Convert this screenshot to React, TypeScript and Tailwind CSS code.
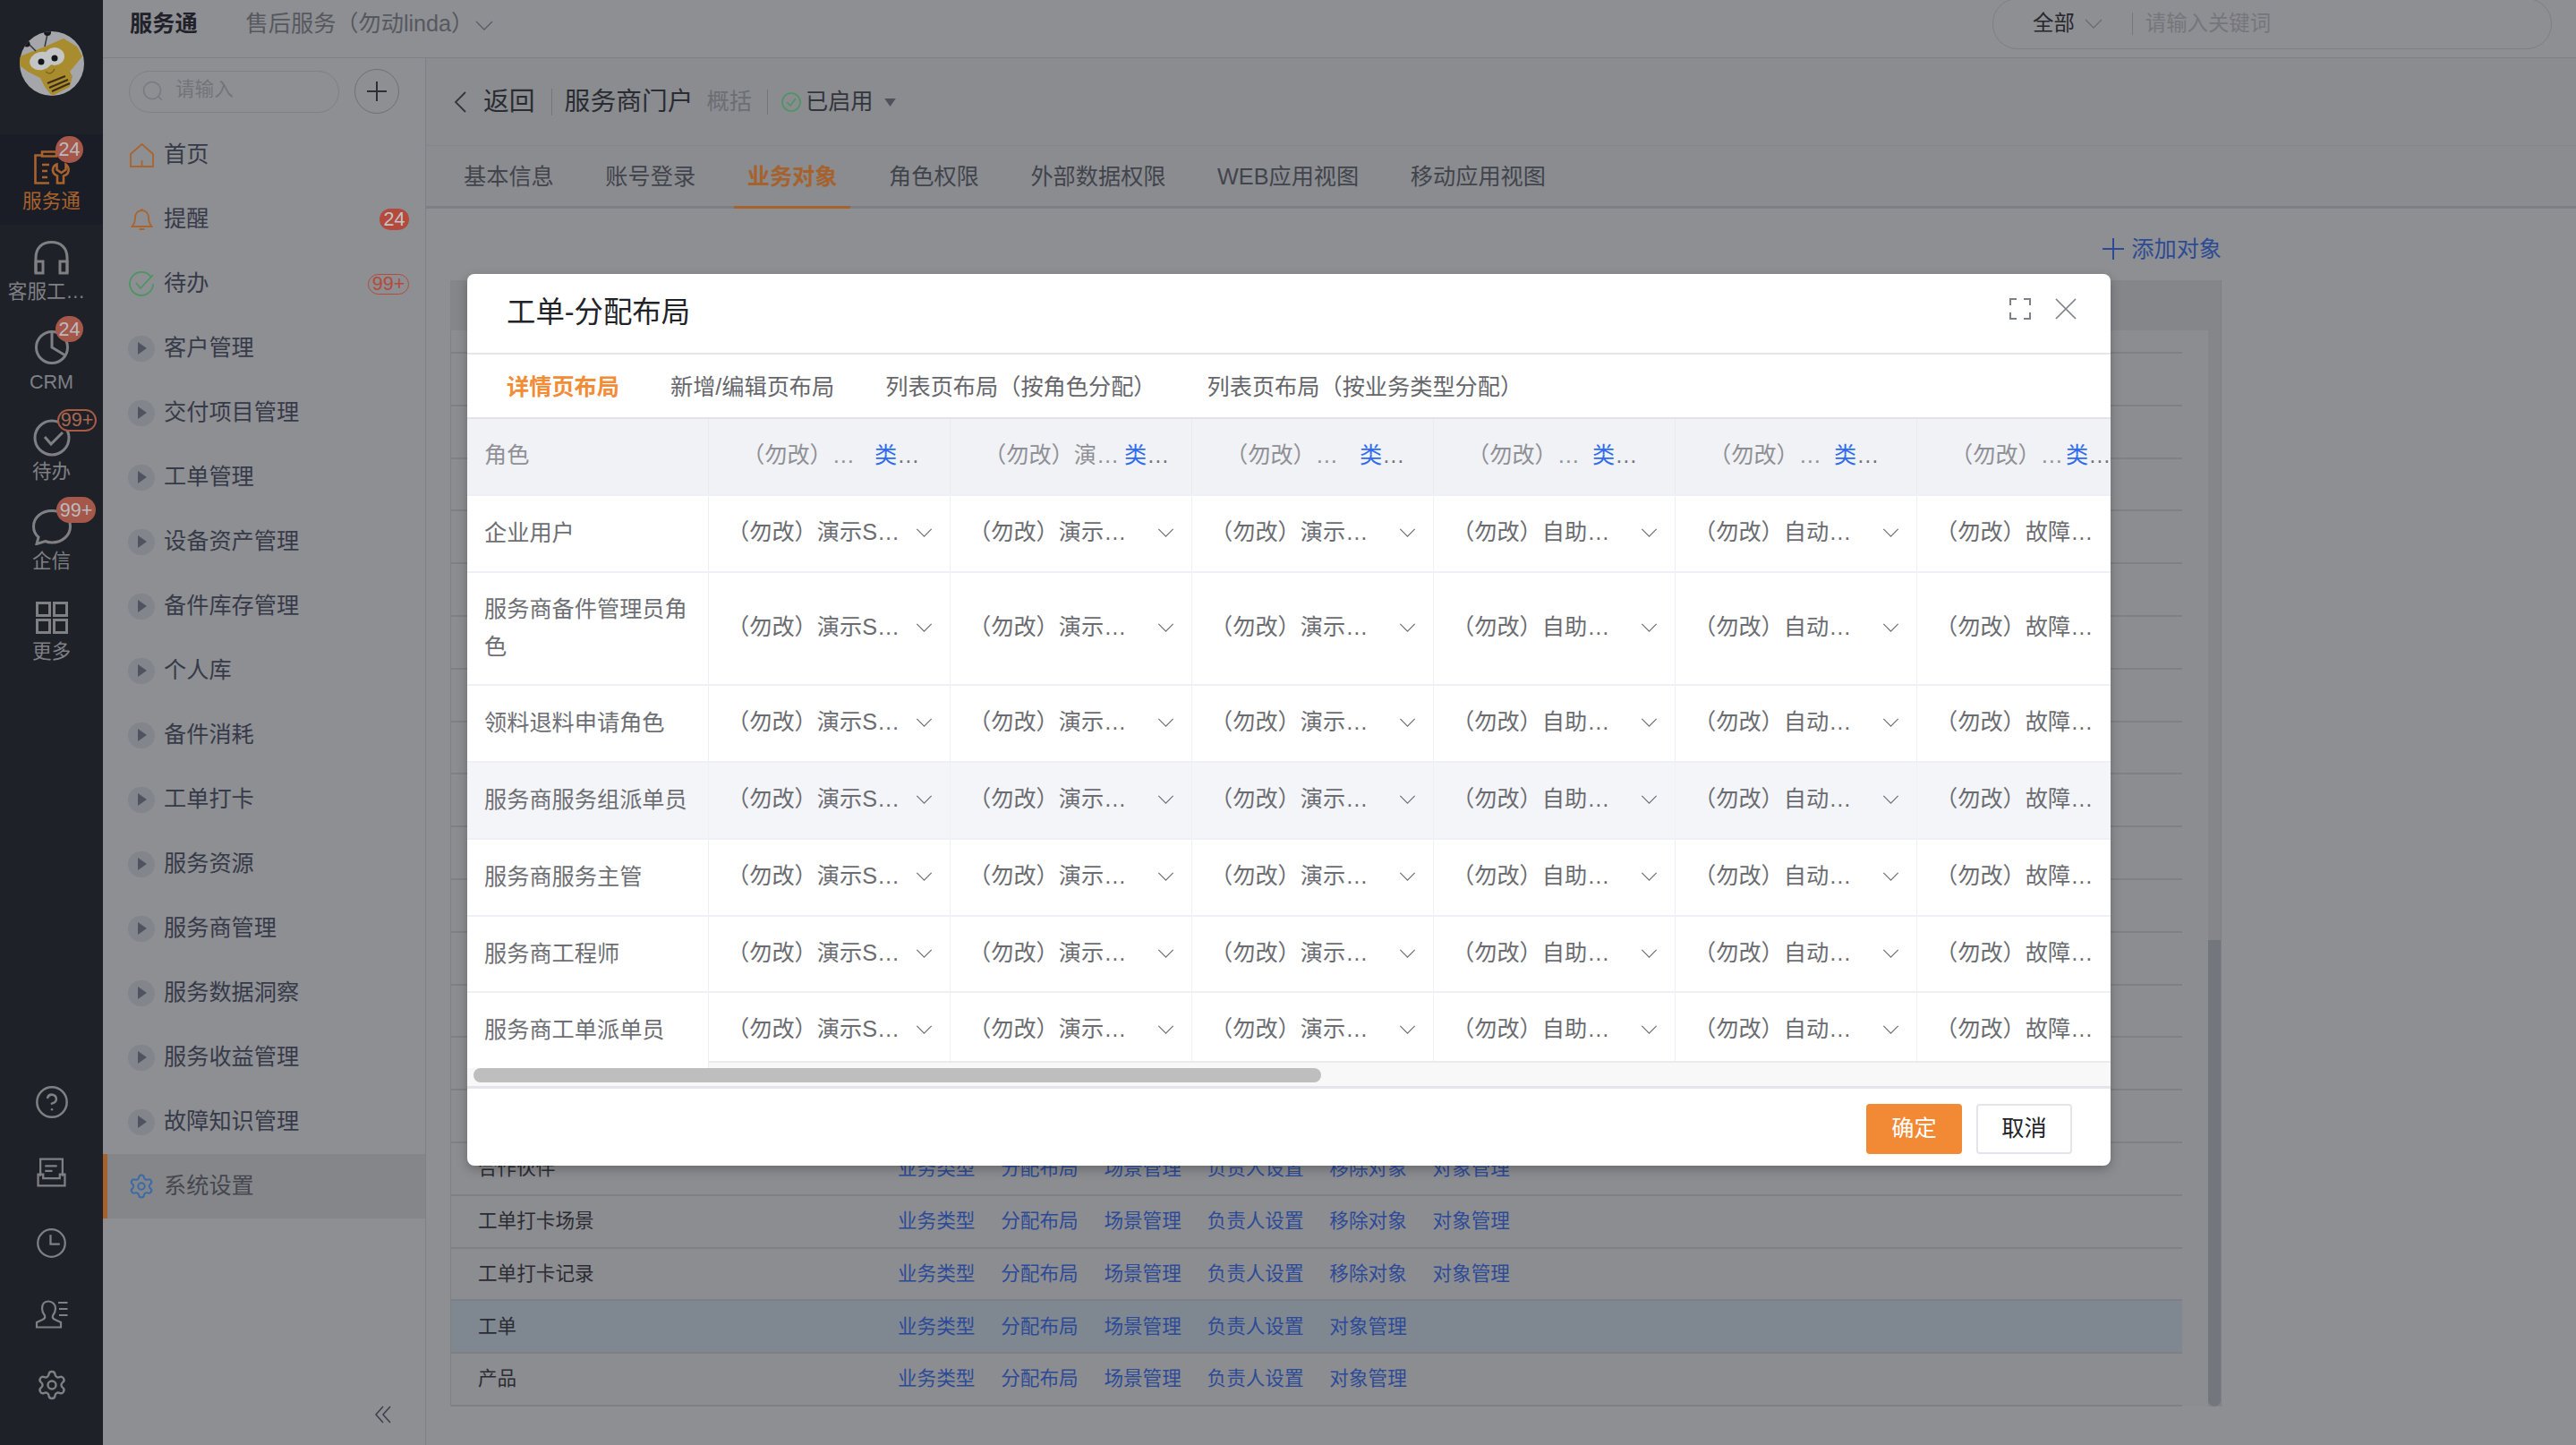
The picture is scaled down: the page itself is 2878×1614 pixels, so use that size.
import React from "react";
import { Settings, CircleHelp } from "lucide-react";

const navItems = ["客户管理", "交付项目管理", "工单管理", "设备资产管理", "备件库存管理", "个人库", "备件消耗", "工单打卡", "服务资源", "服务商管理", "服务数据洞察", "服务收益管理", "故障知识管理"];
const roles = [
  { name: "企业用户", h: "h-[86px]" },
  { name: "服务商备件管理员角色", h: "h-[126px]" },
  { name: "领料退料申请角色", h: "h-[86px]" },
  { name: "服务商服务组派单员", h: "h-[86px]", hover: true },
  { name: "服务商服务主管", h: "h-[86px]" },
  { name: "服务商工程师", h: "h-[85px]" },
  { name: "服务商工单派单员", h: "h-[86px]" },
];
const selects = ["（勿改）演示S…", "（勿改）演示…", "（勿改）演示…", "（勿改）自助…", "（勿改）自动…", "（勿改）故障…"];
const heads = [
  { t: "（勿改）…", w: "w-[148px]" },
  { t: "（勿改）演…", w: "w-[157px]" },
  { t: "（勿改）…", w: "w-[150px]" },
  { t: "（勿改）…", w: "w-[140px]" },
  { t: "（勿改）…", w: "w-[140px]" },
  { t: "（勿改）…", w: "w-[129px]" },
];
const bgRows = [
  { name: "合作伙伴", remove: true },
  { name: "工单打卡场景", remove: true },
  { name: "工单打卡记录", remove: true },
  { name: "工单", remove: false, active: true },
  { name: "产品", remove: false },
];

function Chevron({ className }: { className: string }) {
  return (
    <svg viewBox="0 0 20 11" fill="none" stroke="currentColor" strokeWidth="1.3" className={className}>
      <path d="M1 1l9 9 9-9" />
    </svg>
  );
}

function Badge({ text, outlined, className }: { text: string; outlined?: boolean; className: string }) {
  return (
    <span className={`absolute flex items-center justify-center rounded-full text-[21.6px] leading-none ${outlined ? "border-[2px] border-[#a85a45] bg-[#1e2029] text-[#a8694f]" : "bg-[#a5574a] text-[#b9bbc0]"} ${className}`}>
      {text}
    </span>
  );
}

function Avatar() {
  return (
    <svg viewBox="0 0 72 72" className="h-[72px] w-[72px]">
      <defs>
        <clipPath id="av">
          <circle cx="36" cy="36" r="36" />
        </clipPath>
      </defs>
      <g clipPath="url(#av)">
        <rect width="72" height="72" fill="#a4a6aa" />
        <path d="M0 28L26 18 49 8 64 17 70 28 56 45 59 50 56 62 36 72 28 62 23 52 9 45 0 38Z" fill="#a88c2d" />
        <ellipse cx="24" cy="33" rx="13" ry="10" fill="#c4c5c7" transform="rotate(-15 24 33)" />
        <ellipse cx="39" cy="28" rx="11" ry="10" fill="#c4c5c7" />
        <circle cx="24" cy="34" r="3.5" fill="#15161a" />
        <circle cx="39" cy="30" r="3.5" fill="#15161a" />
        <path d="M29 45Q35 50 39 42" fill="none" stroke="#7d651e" strokeWidth="1.5" />
        <path d="M31 58L51 50M33 63L54 54M36 67L56 58" stroke="#3a2c18" strokeWidth="2.2" />
        <path d="M18 22L9 13M28 17L31 3" stroke="#34353a" strokeWidth="1.5" />
        <circle cx="8" cy="14" r="3.5" fill="#17181c" />
        <circle cx="31" cy="1" r="4" fill="#17181c" />
      </g>
    </svg>
  );
}

function RailItem({ label, icon, badge, active, badgeOutlined, badgeClass, labelClass }: { label: string; icon: React.ReactNode; badge?: string; active?: boolean; badgeOutlined?: boolean; badgeClass?: string; labelClass?: string }) {
  return (
    <div className={`relative flex h-[100.6px] flex-col items-center pt-[17px] ${active ? "bg-[#1b1d26] text-[#a8622d]" : "text-[#7f8084]"}`}>
      <div className="flex h-[40px] items-center justify-center">{icon}</div>
      <div className={`mt-[3px] h-[30px] whitespace-nowrap text-[21.6px] leading-[30px] ${labelClass ?? ""}`}>{label}</div>
      {badge && <Badge text={badge} outlined={badgeOutlined} className={badgeClass ?? ""} />}
    </div>
  );
}

function Rail() {
  return (
    <div className="flex h-full w-[115px] shrink-0 flex-col bg-[#1f2129]">
      <div className="flex h-[150px] justify-center pt-[35px]">
        <Avatar />
      </div>
      <RailItem
        active
        label="服务通"
        badge="24"
        badgeClass="left-[62px] top-[2px] h-[30px] w-[31px]"
        icon={
          <svg viewBox="0 0 40 38" fill="none" stroke="currentColor" strokeWidth="2.6" className="h-[38px] w-[40px]">
            <path d="M9 5.5H1.5V36.5H17M9 1.5H25V6.5H9ZM9 16H17M9 23H15M9 30H15" />
            <path d="M25.5 15.5C21 17 20 22 22 25.5C23 27 25 28 26 28.5V36.5H33V28.5C35 28 38 26 38.5 23C39 20.5 38 17 35.5 15.5V21.5L30.5 25L25.5 21.5Z" />
          </svg>
        }
      />
      <RailItem
        label="客服工…"
        labelClass="mr-[11px]"
        icon={
          <svg viewBox="0 0 39 38" fill="none" stroke="currentColor" strokeWidth="3" className="h-[38px] w-[39px]">
            <path d="M2 36V19C2 8 9 1.5 19.5 1.5S37 8 37 19V36" />
            <rect x="2" y="23" width="8" height="13" />
            <rect x="29" y="23" width="8" height="13" />
          </svg>
        }
      />
      <RailItem
        label="CRM"
        labelClass="mt-[4px]"
        badge="24"
        badgeClass="left-[62px] top-[2px] h-[29px] w-[31px]"
        icon={
          <svg viewBox="0 0 38 38" fill="none" stroke="currentColor" strokeWidth="3" className="h-[38px] w-[38px]">
            <circle cx="19" cy="19" r="17.5" />
            <path d="M19 1.5V19L34 28" />
          </svg>
        }
      />
      <RailItem
        label="待办"
        badge="99+"
        badgeOutlined
        badgeClass="left-[64px] top-[5px] h-[25px] w-[44px]"
        icon={
          <svg viewBox="0 0 42 42" fill="none" stroke="currentColor" strokeWidth="3" className="h-[42px] w-[42px]">
            <circle cx="21" cy="21" r="19" />
            <path d="M13 20L20 28L33 15" />
          </svg>
        }
      />
      <RailItem
        label="企信"
        badge="99+"
        badgeClass="left-[63px] top-[3px] h-[29px] w-[44px]"
        icon={
          <svg viewBox="0 0 44 40" fill="none" stroke="currentColor" strokeWidth="3" className="h-[40px] w-[44px]">
            <path d="M22 1.5C10.5 1.5 1.5 9 1.5 19C1.5 24 3.5 28 7 31L5 38.5L14.5 35.5C17 36.5 19.5 37 22 37C33.5 37 42.5 29 42.5 19S33.5 1.5 22 1.5Z" />
          </svg>
        }
      />
      <RailItem
        label="更多"
        icon={
          <svg viewBox="0 0 36 36" fill="none" stroke="currentColor" strokeWidth="3" className="h-[36px] w-[36px]">
            <rect x="1.5" y="1.5" width="14" height="14" />
            <rect x="20.5" y="1.5" width="14" height="14" />
            <rect x="1.5" y="20.5" width="14" height="14" />
            <rect x="20.5" y="20.5" width="14" height="14" />
          </svg>
        }
      />
      <div className="mt-auto flex flex-col items-center pb-[28px] text-[#7f8084]">
        <div className="flex h-[79px] items-center">
          <CircleHelp size={40} strokeWidth={1.5} />
        </div>
        <div className="flex h-[79px] items-center">
          <svg viewBox="0 0 32 32" fill="none" stroke="currentColor" strokeWidth="2.2" className="h-[33px] w-[33px]">
            <path d="M4 20V1.5H28V20M9 9H22M9 14.5H17" />
            <path d="M1.5 18V30.5H30.5V18H25V22.5H7V18Z" />
          </svg>
        </div>
        <div className="flex h-[79px] items-center">
          <svg viewBox="0 0 32 32" fill="none" stroke="currentColor" strokeWidth="2.2" className="h-[33px] w-[33px]">
            <circle cx="16" cy="16" r="14.8" />
            <path d="M15 7V17H25" />
          </svg>
        </div>
        <div className="flex h-[79px] items-center">
          <svg viewBox="0 0 37 32" fill="none" stroke="currentColor" strokeWidth="2.2" className="h-[32px] w-[37px]">
            <path d="M15 1.5C10.5 1.5 8 5 8 9.5C8 13 9.5 15.5 11 17.5C11.5 19 11 21 8.5 22L2 25V30.5H29V25L22.5 22C20 21 19.5 19 20 17.5C21.5 15.5 23 13 23 9.5C23 5 19.5 1.5 15 1.5Z" />
            <path d="M26 3H36.5M27 10H36.5M27 17H36.5" />
          </svg>
        </div>
        <div className="flex h-[79px] items-center">
          <Settings size={36} strokeWidth={1.6} />
        </div>
      </div>
    </div>
  );
}

function Sidebar() {
  return (
    <div className="flex h-full w-[361px] shrink-0 flex-col border-r-[1px] border-[#7f8085] bg-[#8e8f92]">
      <div className="flex items-center gap-[17px] pl-[29px] pt-[12px]">
        <div className="flex h-[47px] w-[235px] items-center gap-[13px] rounded-full border border-[#7f8085] pl-[14px]">
          <svg viewBox="0 0 24 24" fill="none" stroke="#777a80" strokeWidth="1.6" className="h-[24px] w-[24px]">
            <circle cx="11" cy="11" r="9.5" />
            <path d="M18 18l4 4" />
          </svg>
          <span className="-mt-[3px] text-[21.6px] text-[#72747a]">请输入</span>
        </div>
        <div className="flex h-[50px] w-[50px] items-center justify-center rounded-full border border-[#6f7076]">
          <svg viewBox="0 0 22 22" stroke="#2c2e38" strokeWidth="2" className="h-[22px] w-[22px]">
            <path d="M11 0V22M0 11H22" />
          </svg>
        </div>
      </div>
      <div className="mt-[10px] flex flex-col text-[25.2px] leading-none text-[#363a49]">
        <div className="relative flex h-[72px] items-center pl-[28px]">
          <div className="mr-[10px] flex w-[30px] justify-center">
            <svg viewBox="0 0 27 27" fill="none" stroke="#a8652f" strokeWidth="1.8" className="h-[27px] w-[27px]">
              <path d="M1 12L13.5 1L26 12V26H1ZM13.5 19V26" />
            </svg>
          </div>
          首页
        </div>
        <div className="relative flex h-[72px] items-center pl-[28px]">
          <div className="mr-[10px] flex w-[30px] justify-center">
            <svg viewBox="0 0 25 26" fill="none" stroke="#a8652f" strokeWidth="1.8" className="h-[26px] w-[25px]">
              <path d="M12.5 3C7.5 3 5 7 5 11C5 16 4 18 1.5 21H23.5C21 18 20 16 20 11C20 7 17.5 3 12.5 3ZM12.5 3V1M9.5 24H15.5" />
            </svg>
          </div>
          提醒
          <span className="ml-auto mr-[18px] flex h-[24px] w-[33px] items-center justify-center rounded-full bg-[#b44a3c] text-[21.6px] text-[#c3c4c7]">24</span>
        </div>
        <div className="relative flex h-[72px] items-center pl-[28px]">
          <div className="mr-[10px] flex w-[30px] justify-center">
            <svg viewBox="0 0 30 28" fill="none" stroke="#4d9465" strokeWidth="1.8" className="h-[28px] w-[30px]">
              <path d="M26 7A13 13 0 1 0 28 14" />
              <path d="M9 13L14 19L28 4" />
            </svg>
          </div>
          待办
          <span className="ml-auto mr-[18px] flex h-[23px] w-[46px] items-center justify-center rounded-full border border-[#b44a3c] text-[21.6px] text-[#b44a3c]">99+</span>
        </div>
        {navItems.map((n) => (
          <div key={n} className="flex h-[72px] items-center pl-[28px]">
            <div className="mr-[10px] flex h-[29px] w-[30px] items-center justify-center rounded-full bg-[#82858c]">
              <svg viewBox="0 0 10 14" fill="#4f5460" className="ml-[2px] h-[14px] w-[10px]">
                <path d="M0 0L10 7L0 14Z" />
              </svg>
            </div>
            {n}
          </div>
        ))}
        <div className="flex h-[72px] items-center border-l-[5px] border-[#a5622d] bg-[#85868a] pl-[23px] text-[#45474f]">
          <div className="mr-[10px] flex w-[30px] justify-center">
            <Settings size={30} strokeWidth={1.6} className="text-[#3a6aa8]" />
          </div>
          系统设置
        </div>
      </div>
      <div className="mt-auto flex justify-end pb-[24px] pr-[38px]">
        <svg viewBox="0 0 18 20" fill="none" stroke="#3b3e4d" strokeWidth="1.5" className="h-[20px] w-[18px]">
          <path d="M9 1L1 10L9 19M17 1L9 10L17 19" />
        </svg>
      </div>
    </div>
  );
}

function TopBar() {
  return (
    <div className="flex h-[65px] shrink-0 items-center border-b border-[#7e7f84] bg-[#8e8f92] pb-[10px] pl-[30px] pr-[27px]">
      <span className="text-[25.2px] font-bold text-[#20212a]">服务通</span>
      <span className="ml-[54px] text-[25.2px] text-[#565860]">售后服务（勿动linda）</span>
      <Chevron className="ml-[2px] mt-[2px] h-[11px] w-[20px] text-[#5a5c63]" />
      <div className="ml-auto mt-[-1px] flex h-[57px] w-[625px] items-center rounded-b-[28px] rounded-t-[28px] border border-[#7e7f84] pl-[44px]">
        <span className="text-[23.4px] text-[#26272d]">全部</span>
        <Chevron className="ml-[11px] h-[11px] w-[20px] text-[#6a6c72]" />
        <span className="ml-[33px] mr-[14px] h-[25px] w-px bg-[#77787d]" />
        <span className="text-[23.4px] text-[#75767c]">请输入关键词</span>
      </div>
    </div>
  );
}

function PageTitle() {
  return (
    <div className="flex h-[98px] shrink-0 items-center border-b border-[#85868b] bg-[#8a8c90] pl-[31px]">
      <svg viewBox="0 0 14 24" fill="none" stroke="#33353d" strokeWidth="1.8" className="h-[24px] w-[14px]">
        <path d="M13 1L2 12L13 23" />
      </svg>
      <span className="ml-[19px] text-[28.8px] text-[#2a2c33]">返回</span>
      <span className="ml-[18px] h-[30px] w-px bg-[#74757b]" />
      <span className="ml-[14px] text-[28.8px] text-[#2a2c33]">服务商门户</span>
      <span className="ml-[15px] text-[25.2px] text-[#6c6e74]">概括</span>
      <span className="ml-[17px] h-[28px] w-px bg-[#74757b]" />
      <svg viewBox="0 0 22 22" fill="none" stroke="#4d9465" strokeWidth="1.6" className="ml-[15px] h-[22px] w-[22px]">
        <circle cx="11" cy="11" r="10" />
        <path d="M6 11L10 15L16 7" />
      </svg>
      <span className="ml-[5px] text-[25.2px] text-[#33353d]">已启用</span>
      <svg viewBox="0 0 14 10" fill="#4f525c" className="ml-[12px] mt-[2px] h-[9px] w-[13px]">
        <path d="M0 0H14L7 10Z" />
      </svg>
    </div>
  );
}

function Tabs() {
  const tabs = ["基本信息", "账号登录", "业务对象", "角色权限", "外部数据权限", "WEB应用视图", "移动应用视图"];
  return (
    <div className="flex h-[70px] shrink-0 gap-[27.6px] border-b-[3px] border-[#7e7f84] bg-[#8a8c90] pl-[27px]">
      {tabs.map((t, i) => (
        <div key={t} className={`-mb-[3px] flex items-center px-[15px] text-[25.2px] ${i === 2 ? "border-b-[3px] border-[#a5622d] pt-[3px] font-bold text-[#a5622d]" : "text-[#42444c]"}`}>
          {t}
        </div>
      ))}
    </div>
  );
}

function BackgroundTable() {
  const blanks = Array.from({ length: 15 });
  return (
    <div className="mx-[27px] flex w-[1979px] flex-col">
      <div className="flex h-[80px] items-start justify-end pt-[30px]">
        <div className="flex items-center gap-[8px] text-[25.2px] leading-[30px] text-[#2d4a94]">
          <svg viewBox="0 0 24 24" stroke="#2d4a94" strokeWidth="2" className="h-[24px] w-[24px]">
            <path d="M12 0V24M0 12H24" />
          </svg>
          添加对象
        </div>
      </div>
      <div className="flex flex-col border-b-0 border-r border-[#7f8085]">
        <div className="h-[56px] bg-[#84868a]" />
        <div className="flex bg-[#8c8d90]">
          <div className="w-[1936px] border-l border-[#808185]">
            <div className="h-[26px] border-b-[2px] border-[#7f8084]" />
            {blanks.map((_, i) => (
              <div key={i} className="h-[58.8px] border-b-[2px] border-[#7f8084]" />
            ))}
            {bgRows.map((r) => (
              <div key={r.name} className={`flex h-[58.8px] items-center border-b-[2px] border-[#7f8084] pl-[30px] text-[21.6px] ${r.active ? "bg-[#7f8791]" : ""}`}>
                <span className="w-[469px] text-[#2b2c33]">{r.name}</span>
                <span className="flex gap-[28.8px] text-[#2c4a98]">
                  <span>业务类型</span>
                  <span>分配布局</span>
                  <span>场景管理</span>
                  <span>负责人设置</span>
                  {r.remove && <span>移除对象</span>}
                  <span>对象管理</span>
                </span>
              </div>
            ))}
          </div>
          <div className="w-[29px]" />
          <div className="flex w-[14px] flex-col bg-[#85868a]">
            <div className="mt-auto h-[521px] rounded-b-full bg-[#74767e]" />
          </div>
        </div>
      </div>
    </div>
  );
}

function Modal() {
  return (
    <div className="absolute left-[522px] top-[306px] flex h-[996px] w-[1836px] flex-col overflow-hidden rounded-[8px] bg-white shadow-[0_4px_12px_rgba(0,0,0,0.25)]">
      <div className="flex h-[90px] shrink-0 items-center border-b-[2px] border-[#e6e6ea] pb-[1px] pl-[44px] pr-[38px]">
        <span className="text-[32.4px] text-[#222329]">工单-分配布局</span>
        <svg viewBox="0 0 24 24" fill="none" stroke="#7d8089" strokeWidth="2" className="-mt-[9px] ml-auto h-[24px] w-[24px]">
          <path d="M1 8V1H8M16 1H23V8M23 16V23H16M8 23H1V16" />
        </svg>
        <svg viewBox="0 0 24 24" fill="none" stroke="#7d8089" strokeWidth="1.7" className="-mt-[9px] ml-[27px] h-[24px] w-[24px]">
          <path d="M1 1L23 23M23 1L1 23" />
        </svg>
      </div>
      <div className="flex h-[70px] shrink-0 items-center gap-[57px] pl-[44px] pt-[4px] text-[25.2px] text-[#66676c]">
        <span className="font-bold text-[#f28c36]">详情页布局</span>
        <span>新增/编辑页布局</span>
        <span>列表页布局（按角色分配）</span>
        <span>列表页布局（按业务类型分配）</span>
      </div>
      <div className="relative h-[750px] shrink-0 overflow-hidden border-t-[2px] border-[#e2e3e8] text-[25.2px]">
        <div className="flex h-[84px] w-max items-center bg-[#f1f2f5]">
          <div className="flex h-full w-[270px] items-center border-r border-[#e9eaee] pb-[2px] pl-[19px] text-[#8f9095]">角色</div>
          {heads.map((h, i) => (
            <div key={i} className="flex h-full w-[270px] shrink-0 items-center border-r border-[#e9eaee] pb-[2px] pl-[37px]">
              <span className={`${h.w} text-[#8f9095]`}>{h.t}</span>
              <span className="text-[#2f6bf0]">类<span className="text-[#6f7480]">…</span></span>
            </div>
          ))}
        </div>
        {roles.map((r) => (
          <div key={r.name} className={`flex w-max border-t-[2px] border-[#eef0f5] ${r.h} ${r.hover ? "bg-[#f4f5f9]" : "bg-white"}`}>
            <div className="flex w-[270px] shrink-0 items-center border-r border-[#eef0f5] pb-[2px] pl-[19px] pr-[18px] text-[#6e6f74] leading-[42px]">{r.name}</div>
            {selects.map((s, i) => (
              <div key={i} className="flex w-[270px] shrink-0 items-center border-r border-[#eef0f5] pb-[2px] pl-[20px] text-[#6b6c71]">
                <span className="w-[211px]">{s}</span>
                <Chevron className="h-[10px] w-[19px] text-[#6d6f75]" />
              </div>
            ))}
          </div>
        ))}
        <div className="absolute left-[270px] right-0 top-[717px] h-[12px] border-t-[2px] border-[#ebebeb] bg-[#f8f8f8]" />
        <div className="absolute bottom-0 left-0 right-0 h-[23px] border-b-[3px] border-[#e4e4ea] bg-[#f8f8f8]" />
        <div className="absolute left-[7px] top-[725px] h-[16px] w-[947px] rounded-full bg-[#bebebe]" />
      </div>
      <div className="flex flex-1 items-center justify-end gap-[16px] pr-[43px] pt-[3px] text-[25.2px]">
        <button className="h-[56px] w-[107px] rounded-[4px] bg-[#f28a35] text-white">确定</button>
        <button className="h-[56px] w-[107px] rounded-[4px] border-[2px] border-[#e4e4ea] bg-white text-[#222329]">取消</button>
      </div>
    </div>
  );
}

export default function App() {
  return (
    <div className="relative flex h-[1614px] w-[2878px] overflow-hidden bg-[#8e8f92] font-['Liberation_Sans','Noto_Sans_CJK_SC',sans-serif]">
      <Rail />
      <div className="flex min-w-0 flex-1 flex-col">
        <TopBar />
        <div className="flex min-h-0 flex-1">
          <Sidebar />
          <div className="flex min-w-0 flex-1 flex-col">
            <PageTitle />
            <Tabs />
            <BackgroundTable />
          </div>
        </div>
      </div>
      <Modal />
    </div>
  );
}
